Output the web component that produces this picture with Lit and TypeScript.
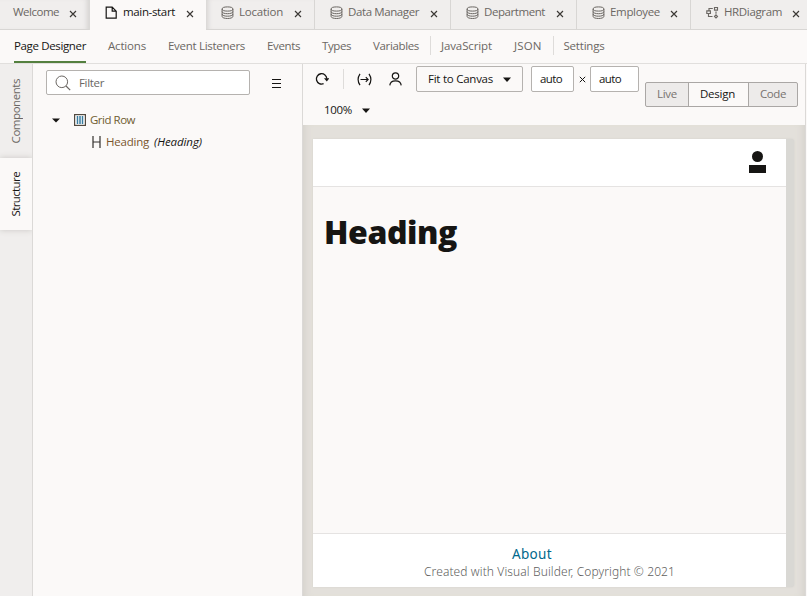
import { LitElement, html, css, svg, nothing } from "lit";
import { customElement, property } from "lit/decorators.js";
import { classMap } from "lit/directives/class-map.js";

const icons: Record<string, unknown> = {
  file: svg`<path d="M1.2 1.2h6l4 4v7H1.2z M7.2 1.2v4h4" stroke-width="1.2"/>`,
  db: svg`<ellipse cx="6.5" cy="3" rx="5.4" ry="2.1"/><path d="M1.1 3v7.4c0 2.8 10.8 2.8 10.8 0V3 M1.1 5.6c0 2.8 10.8 2.8 10.8 0 M1.1 8.1c0 2.8 10.8 2.8 10.8 0"/>`,
  diagram: svg`<path d="M8.5 1.5h3v2.6h-3z M6.8 2.5H3v2 M.8 4.9h3.6v2.6H.8z M2.5 7.5v3h4 M10 5.5v2.2 M8.5 10.4L10 8.9l1.5 1.5L10 11.9z" stroke-width="1.15"/>`,
};

const tabs = [
  { text: "Welcome", icon: "", width: 89, label: 46 },
  { text: "main-start", icon: "file", width: 117, label: 52, active: true },
  { text: "Location", icon: "db", width: 109, label: 44 },
  { text: "Data Manager", icon: "db", width: 136, label: 71 },
  { text: "Department", icon: "db", width: 126, label: 61 },
  { text: "Employee", icon: "db", width: 114, label: 50 },
  { text: "HRDiagram", icon: "diagram", width: 122, label: 58 },
];

const sections = [
  { text: "Page Designer", width: 72, active: true },
  { text: "Actions", width: 38 },
  { text: "Event Listeners", width: 77 },
  { text: "Events", width: 33 },
  { text: "Types", width: 29 },
  { text: "Variables", width: 46, divider: true },
  { text: "JavaScript", width: 51 },
  { text: "JSON", width: 27.5, divider: true },
  { text: "Settings", width: 41 },
];

/** A one-line label that spreads its tracking so that it fills a given width. */
@customElement("fit-label")
export class FitLabel extends LitElement {
  @property() text = "";
  @property({ type: Number }) width = 0;
  static styles = css`
    :host { display: inline-block; white-space: pre; flex: none; }
    span { display: inline-block; }
  `;
  updated() {
    this.style.width = this.width + "px";
    const span = this.renderRoot.querySelector("span")!;
    span.style.letterSpacing = "0px";
    const natural = span.getBoundingClientRect().width;
    span.style.letterSpacing = (this.width - natural) / this.text.length + "px";
  }
  render() {
    return html`<span>${this.text}</span>`;
  }
}

const label = (text: string, width: number) => html`<fit-label .text=${text} .width=${width}></fit-label>`;

@customElement("app-root")
export class AppRoot extends LitElement {
  static styles = css`
    :host {
      display: flex; flex-direction: column; width: 807px; height: 596px; overflow: hidden;
      background: #fbf9f8; color: #161513; box-sizing: border-box;
      font: 11.5px/16px "Open Sans", "Noto Sans", sans-serif;
    }
    * { box-sizing: border-box; }
    svg { display: block; flex: none; fill: none; stroke: currentColor; stroke-width: 1; }
    .tabs { display: flex; height: 30px; flex: none; background: #f0eeed; color: #6b6763; }
    .tab { display: flex; flex: none; height: 30px; padding: 0 12px 5px 15px; align-items: center; border-right: 1px solid #d8d6d4; border-bottom: 1px solid #d8d6d4; }
    .tab:first-child { padding-left: 13px; border-right: 0; box-shadow: inset -5px 0 5px -3px #d5d3d1; }
    .tab.active { background: #fbf9f8; color: #161513; border-bottom: 0; border-right: 0; padding-bottom: 6px; padding-right: 12px; border-left: 1px solid #dbd9d7; }
    .tab.active + .tab { box-shadow: inset 5px 0 5px -3px #d5d3d1; padding-left: 15px; }
    .tab svg:first-child { margin-right: 5px; }
    .tab .cross { margin: 4px 0 0 auto; color: #3b3835; }
    .nav { display: flex; height: 34px; flex: none; padding: 0 14px; border-bottom: 1px solid #e1dfdd; color: #6b6763; }
    .nav .item { height: 33px; padding-top: 8px; margin-right: 22px; }
    .nav .item.active { color: #161513; border-bottom: 2px solid #54803f; }
    .nav .item.split { margin-right: 11px; }
    .bar { width: 1px; height: 19px; margin: 6px 10px 0 0; background: #dedcda; }
    .body { display: flex; flex: 1; min-height: 0; }
    .rail { width: 33px; flex: none; background: #f0eeed; border-right: 1px solid #dbd9d7; color: #6b6763; }
    .side { display: flex; align-items: center; justify-content: center; writing-mode: vertical-rl; width: 32px; font-size: 11.5px; }
    .side span { transform: rotate(180deg); letter-spacing: -.45px; }
    .side.first { height: 94px; }
    .side.on { height: 72px; background: #fbf9f8; color: #161513; box-shadow: 0 0 6px #c9c6c3; clip-path: inset(-8px 0 -8px 0); }
    .side.on span { letter-spacing: -.6px; }
    .panel { width: 270px; flex: none; border-right: 1px solid #dbd9d7; padding: 6px 0 0 13px; }
    .search { display: flex; align-items: center; }
    .field { display: flex; align-items: center; width: 204px; height: 25px; padding-left: 8px; gap: 8px; background: #fff; border: 1px solid #b5b2af; border-radius: 2px; color: #6b6763; }
    .menu { margin-left: 22px; color: #161513; }
    .row { display: flex; align-items: center; height: 22px; color: #6f5c31; }
    .row.grid { margin-top: 14px; padding-left: 6px; }
    .row.leaf { padding-left: 46px; color: #79552d; }
    .row i { color: #161513; margin-left: 5px; }
    .gridicon { margin: 0 4px 0 14px; }
    .work { display: flex; flex-direction: column; width: 503px; flex: none; border-right: 1px solid #dbd9d7; }
    .tools { display: flex; height: 61px; flex: none; }
    .left { width: 342px; flex: none; }
    .line { display: flex; align-items: center; height: 30px; }
    .line.second { padding: 2px 0 0 21px; }
    .line .sep { width: 1px; height: 20px; background: #dedcda; margin: 0 13px 0 14px; }
    .box { display: flex; align-items: center; height: 26px; border: 1px solid #b5b2af; border-radius: 2px; background: #fff; padding-left: 8px; }
    .box.fit { width: 107px; background: #fbf9f8; padding: 0 11px; justify-content: space-between; margin: 0 8px 0 14px; }
    .modes { display: flex; width: 153px; height: 25px; margin-top: 18px; border: 1px solid #aaa7a5; border-radius: 2px; background: #edebea; color: #78736f; }
    .modes div { display: flex; align-items: center; justify-content: center; padding-bottom: 1px; }
    .modes .design { background: #fbf9f8; color: #161513; border: solid #aaa7a5; border-width: 0 1px; padding-right: 2px; }
    .stage { flex: 1; background: #e3e0db; padding: 14px 12px 9px 10px; box-shadow: inset 8px 0 8px -7px #d1cec9, inset -8px 0 8px -7px #d1cec9; }
    .device { display: flex; height: 448px; width: 481px; padding-right: 8px; background: #d9d8d4; border-radius: 0 3px 3px 0; box-shadow: 0 0 2px #d0cdc9; }
    .page { display: flex; flex-direction: column; width: 473px; background: #fbf9f8; }
    .top { display: flex; justify-content: flex-end; height: 48px; padding: 12px 20px 0 0; background: #fff; border-bottom: 1px solid #e5e3e2; }
    h1 { flex: 1; margin: 0; padding: 23px 0 0 11px; font: 800 32px/44px "Open Sans", "Noto Sans", sans-serif; }
    .foot { display: flex; flex-direction: column; height: 54px; padding: 10px 0 0 111px; background: #fff; border-top: 1px solid #e5e3e2; color: #7c7a78; font: 12px/18px "Noto Sans", sans-serif; }
    .about { color: #00688c; font-size: 13.5px; line-height: 20px; padding-left: 88px; }
    .foot .copy { font-weight: 300; line-height: 15px; color: #605e5c; }
  `;

  private cross() {
    return html`<svg class="cross" width="8" height="8"><path d="M1 1l6 6M7 1L1 7" stroke-width="1.15"/></svg>`;
  }

  private caret() {
    return html`<svg width="8" height="5"><path d="M0 .5h8L4 5z" fill="currentColor" stroke="none"/></svg>`;
  }

  render() {
    return html`
      <div class="tabs">${tabs.map(t => html`
        <div class=${classMap({ tab: true, active: !!t.active })} style="width:${t.width}px">
          ${t.icon ? html`<svg width="13" height="13">${icons[t.icon]}</svg>` : nothing}
          ${label(t.text, t.label)}${this.cross()}
        </div>`)}
      </div>
      <div class="nav">${sections.map(s => html`
        <div class=${classMap({ item: true, active: !!s.active, split: !!s.divider })}>${label(s.text, s.width)}</div>
        ${s.divider ? html`<div class="bar"></div>` : nothing}`)}
      </div>
      <div class="body">
        <div class="rail">
          <div class="side first"><span>Components</span></div>
          <div class="side on"><span>Structure</span></div>
        </div>
        <div class="panel">
          <div class="search">
            <div class="field">
              <svg width="16" height="16"><circle cx="6.8" cy="6.8" r="5.8"/><path d="M11 11l4.2 4.2" stroke-width="1.2"/></svg>
              ${label("Filter", 25)}
            </div>
            <svg class="menu" width="9" height="10"><path d="M0 1.5h9M0 5.5h9M0 9.5h9"/></svg>
          </div>
          <div class="row grid">
            <svg width="8" height="5"><path d="M0 .5h8L4 4.5z" fill="#161513" stroke="none"/></svg>
            <svg class="gridicon" width="12" height="12"><rect x=".6" y=".6" width="10.8" height="10.8" fill="#fff" stroke="#51493f" stroke-width="1.2"/><path d="M3.5 2v8M6 2v8M8.5 2v8" stroke="#397b9e" stroke-width="1.5"/></svg>
            ${label("Grid Row", 45)}
          </div>
          <div class="row leaf">
            <svg width="9" height="12"><path d="M1 0v12M8 0v12M1 6h7" stroke="#33302d" stroke-width="1.2"/></svg>
            <span style="width:5px"></span>${label("Heading", 43)}<i>${label("(Heading)", 48)}</i>
          </div>
        </div>
        <div class="work">
          <div class="tools">
            <div class="left">
              <div class="line">
                <svg width="14" height="14" style="margin-left:12px"><path d="M8.6 11.7A5.2 5.2 0 1 1 11.8 6.8" stroke-width="1.3"/><path d="M9 6.2h5.5L11.8 9.5z" fill="currentColor" stroke="none"/></svg>
                <span class="sep"></span>
                <svg width="15" height="13"><path d="M3 .8q-3.8 5.7 0 11.4M12 .8q3.8 5.7 0 11.4M3.5 6.5H11M8.8 4.2l2.3 2.3-2.3 2.3" stroke-width="1.2"/></svg>
                <svg width="13" height="14" style="margin-left:17px"><circle cx="6.5" cy="4" r="3.2" stroke-width="1.2"/><path d="M.8 13.4C1.3 7.3 11.7 7.3 12.2 13.4" stroke-width="1.2"/></svg>
                <div class="box fit">${label("Fit to Canvas", 65)}${this.caret()}</div>
                <div class="box" style="width:43px">${label("auto", 22)}</div>
                <svg width="7" height="7" style="margin:0 4px 0 5px"><path d="M.8 .8l5.4 5.4M6.2 .8L.8 6.2"/></svg>
                <div class="box" style="width:49px">${label("auto", 22)}</div>
              </div>
              <div class="line second">${label("100%", 28)}<span style="width:10px"></span>${this.caret()}</div>
            </div>
            <div class="modes">
              <div style="width:42px">${label("Live", 20)}</div>
              <div class="design" style="width:61px">${label("Design", 35)}</div>
              <div style="width:48px">${label("Code", 26)}</div>
            </div>
          </div>
          <div class="stage">
            <div class="device">
              <div class="page">
                <div class="top"><svg width="17" height="23"><g fill="#161513" stroke="none"><circle cx="8.5" cy="5.5" r="5.5"/><path d="M0 14h17v8H0z"/></g></svg></div>
                <h1>${label("Heading", 133)}</h1>
                <div class="foot">
                  <div class="about">${label("About", 40)}</div>
                  <div class="copy">${label("Created with Visual Builder, Copyright © 2021", 251)}</div>
                </div>
              </div>
            </div>
          </div>
        </div>
      </div>`;
  }
}
